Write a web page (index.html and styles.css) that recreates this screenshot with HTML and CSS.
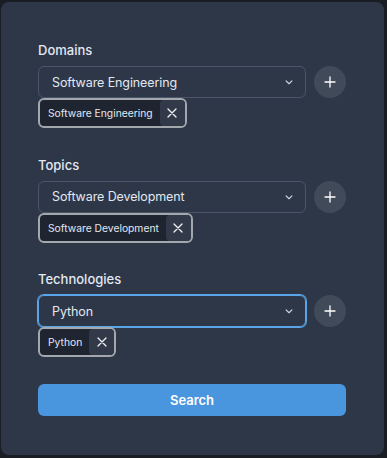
FILE: index.html
```html
<!DOCTYPE html>
<html lang="en">
<head>
  <meta charset="UTF-8" />
  <meta name="viewport" content="width=device-width, initial-scale=1.0"/>
  <title>Search Filters</title>
  <link rel="stylesheet" href="styles.css">
</head>
<body>
  <div class="card">
    <!-- Domains -->
    <div class="field">
      <label class="field-label">Domains</label>
      <div class="select-row">
        <div class="select">
          <span>Software Engineering</span>
          <svg class="chevron" width="14" height="14" viewBox="0 0 24 24"><path d="M7 10l5 5 5-5" fill="none" stroke="currentColor" stroke-width="2" stroke-linecap="round" stroke-linejoin="round"/></svg>
        </div>
        <button class="add-btn" aria-label="Add">
          <svg width="12" height="12" viewBox="0 0 12 12"><path d="M6 1v10M1 6h10" stroke="currentColor" stroke-width="1.3" stroke-linecap="round"/></svg>
        </button>
      </div>
      <div class="tags">
        <span class="tag">
          <span class="tag-label">Software Engineering</span>
          <span class="tag-close">
            <svg width="10" height="10" viewBox="0 0 10 10"><path d="M1 1l8 8M9 1l-8 8" stroke="currentColor" stroke-width="1.3" stroke-linecap="round"/></svg>
          </span>
        </span>
      </div>
    </div>

    <!-- Topics -->
    <div class="field">
      <label class="field-label">Topics</label>
      <div class="select-row">
        <div class="select">
          <span>Software Development</span>
          <svg class="chevron" width="14" height="14" viewBox="0 0 24 24"><path d="M7 10l5 5 5-5" fill="none" stroke="currentColor" stroke-width="2" stroke-linecap="round" stroke-linejoin="round"/></svg>
        </div>
        <button class="add-btn" aria-label="Add">
          <svg width="12" height="12" viewBox="0 0 12 12"><path d="M6 1v10M1 6h10" stroke="currentColor" stroke-width="1.3" stroke-linecap="round"/></svg>
        </button>
      </div>
      <div class="tags">
        <span class="tag">
          <span class="tag-label">Software Development</span>
          <span class="tag-close">
            <svg width="10" height="10" viewBox="0 0 10 10"><path d="M1 1l8 8M9 1l-8 8" stroke="currentColor" stroke-width="1.3" stroke-linecap="round"/></svg>
          </span>
        </span>
      </div>
    </div>

    <!-- Technologies -->
    <div class="field">
      <label class="field-label">Technologies</label>
      <div class="select-row">
        <div class="select focused">
          <span>Python</span>
          <svg class="chevron" width="14" height="14" viewBox="0 0 24 24"><path d="M7 10l5 5 5-5" fill="none" stroke="currentColor" stroke-width="2" stroke-linecap="round" stroke-linejoin="round"/></svg>
        </div>
        <button class="add-btn" aria-label="Add">
          <svg width="12" height="12" viewBox="0 0 12 12"><path d="M6 1v10M1 6h10" stroke="currentColor" stroke-width="1.3" stroke-linecap="round"/></svg>
        </button>
      </div>
      <div class="tags">
        <span class="tag">
          <span class="tag-label">Python</span>
          <span class="tag-close">
            <svg width="10" height="10" viewBox="0 0 10 10"><path d="M1 1l8 8M9 1l-8 8" stroke="currentColor" stroke-width="1.3" stroke-linecap="round"/></svg>
          </span>
        </span>
      </div>
    </div>

    <button class="search-btn">Search</button>
  </div>
</body>
</html>
```

FILE: styles.css
```css
:root {
  --page-bg: #1a1d24;
  --card-bg: #2d3748;
  --text: #e2e8f0;
  --border: #4a5568;
  --blue: #4a96de;
}

* {
  box-sizing: border-box;
}

body {
  margin: 0;
  background: var(--page-bg);
  font-family: 'Inter', 'Noto Sans', sans-serif;
  color: var(--text);
}

.card {
  margin: 2px 3px 3px 1px;
  height: 453px;
  background: var(--card-bg);
  border-radius: 8px;
  padding: 38px 38px 0 37px;
  display: flex;
  flex-direction: column;
  gap: 26.5px;
}

.field {
  display: flex;
  flex-direction: column;
}

.field-label {
  font-size: 13px;
  line-height: 20px;
  font-weight: 500;
  margin-bottom: 6px;
}

.select-row {
  display: flex;
  align-items: center;
  gap: 8px;
}

.select {
  flex: 1;
  height: 32px;
  border: 1px solid var(--border);
  border-radius: 6px;
  display: flex;
  align-items: center;
  justify-content: space-between;
  padding: 0 9px 0 13px;
  font-size: 12.5px;
  letter-spacing: -0.1px;
}

.select.focused {
  border-color: #5aa5e8;
  box-shadow: 0 0 0 1px #5aa5e8;
}

.chevron {
  color: #cbd5e0;
}

.add-btn {
  width: 32px;
  height: 32px;
  border-radius: 50%;
  border: none;
  background: #414a59;
  color: #fff;
  display: flex;
  align-items: center;
  justify-content: center;
  padding: 0;
}

.tags {
  display: flex;
}

.tag {
  display: inline-flex;
  align-items: stretch;
  height: 30px;
  border: 2px solid #a3a7ae;
  border-radius: 6px;
  background: #1f2431;
  overflow: hidden;
}

.tag-label {
  display: flex;
  align-items: center;
  padding: 0 7px 0 8px;
  font-size: 10.3px;
}

.tag-close {
  width: 25px;
  display: flex;
  align-items: center;
  justify-content: center;
  background: #323948;
  border-radius: 4px;
  color: #f0f2f5;
}

.search-btn {
  height: 32px;
  border: none;
  border-radius: 6px;
  background: var(--blue);
  color: #fff;
  font-family: inherit;
  font-size: 13px;
  font-weight: 600;
}
```
